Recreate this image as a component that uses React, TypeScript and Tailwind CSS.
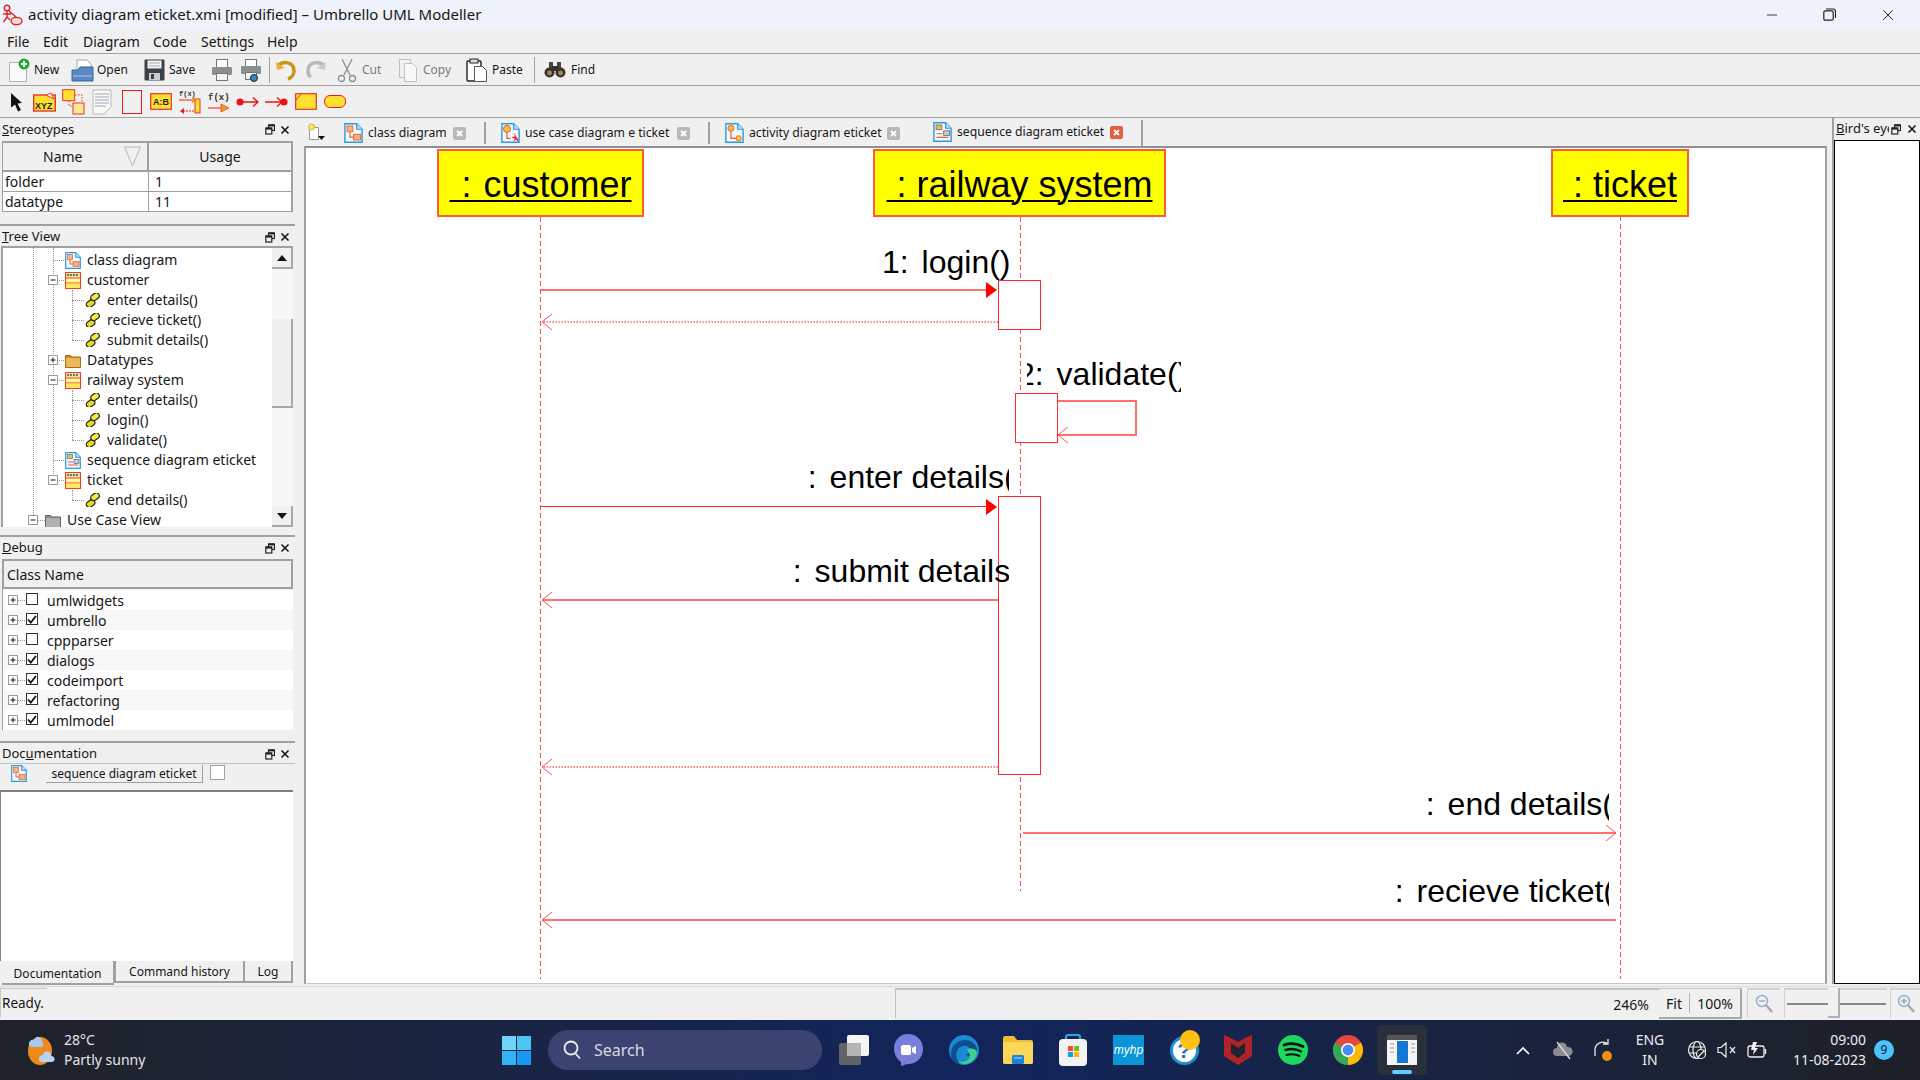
import { Minus, X } from "lucide-react";

// small helper drawings --------------------------------------------------

function FloatIcon() {
  return (
    <svg width="10" height="11" viewBox="0 0 10 11" fill="none" stroke="#222" strokeWidth="1.2">
      <rect x="3.5" y="1" width="6" height="5.5" fill="#f0f0f0" />
      <rect x="0.8" y="4" width="6" height="6" fill="#f0f0f0" />
      <path d="M3.5 1.4h6" strokeWidth="2" />
      <path d="M0.8 4.6h6" strokeWidth="2" />
    </svg>
  );
}

function CloseIcon() {
  return (
    <svg width="10" height="10" viewBox="0 0 10 10" stroke="#111" strokeWidth="1.5">
      <path d="M1.5 1.5l7 7M8.5 1.5l-7 7" />
    </svg>
  );
}

function ClassIcon() {
  return (
    <svg width="16" height="17" viewBox="0 0 16 17" className="shrink-0">
      <rect x="0.5" y="0.5" width="15" height="16" fill="#fff7a0" stroke="#f0401c" />
      <rect x="1" y="1" width="14" height="4" fill="#e8e0b8" />
      <path d="M2 3h12" stroke="#6b7a50" strokeWidth="2" strokeDasharray="2 1" />
      <path d="M1 6h14M1 11h14" stroke="#f0401c" />
      <rect x="1" y="11.5" width="14" height="4.5" fill="#ffe860" />
    </svg>
  );
}

function OpIcon() {
  return (
    <svg width="16" height="14" viewBox="0 0 16 14" className="shrink-0">
      <g transform="rotate(-35 8 7)">
        <rect x="-0.5" y="5.5" width="9" height="6" rx="3" fill="#e8d820" stroke="#222" strokeWidth="1.2" />
        <rect x="7" y="2.5" width="9" height="6" rx="3" fill="#f6ea40" stroke="#222" strokeWidth="1.2" />
      </g>
    </svg>
  );
}

function FolderIcon({ gray }: { gray?: boolean }) {
  return (
    <svg width="16" height="15" viewBox="0 0 16 15" className="shrink-0">
      <path d="M0.5 2.5h5l1.5 1.5h8.5v10.5H0.5z" fill={gray ? "#8e8e8e" : "#c98a20"} stroke={gray ? "#666" : "#a87018"} />
      <rect x="1" y="5" width="14" height="9" fill={gray ? "#b0b0b0" : "#eeb858"} />
    </svg>
  );
}

function DiagramIcon({ kind, size = 16 }: { kind: "class" | "seq" | "usecase" | "activity"; size?: number }) {
  return (
    <svg width={size} height={size + 1} viewBox="0 0 16 17" className="shrink-0">
      <path d="M0.7 0.7h10l4.6 4.6v11H0.7z" fill="#f2f8ff" stroke="#2e9ae0" strokeWidth="1.2" />
      <path d="M10.7 0.7v4.6h4.6" fill="#bfe0f8" stroke="#2e9ae0" />
      {kind === "class" && (
        <>
          <rect x="2.5" y="2.5" width="5" height="5" fill="#f8b080" stroke="#e06030" strokeWidth="0.7" />
          <rect x="8" y="9.5" width="6" height="5" fill="#f8b080" stroke="#e06030" strokeWidth="0.7" />
          <path d="M5 8v4h3" stroke="#e06030" fill="none" />
        </>
      )}
      {kind === "seq" && (
        <>
          <rect x="2.5" y="2.5" width="5" height="4" fill="#d8c060" stroke="#807040" strokeWidth="0.7" />
          <rect x="9" y="7.5" width="5" height="4" fill="#c0c8d0" stroke="#607080" strokeWidth="0.7" />
          <path d="M3 10h5M3 13h10" stroke="#e06030" />
        </>
      )}
      {kind === "usecase" && (
        <>
          <circle cx="5" cy="5" r="3" fill="#f0c040" stroke="#e06030" strokeWidth="0.8" />
          <path d="M5 8v5h3" stroke="#e06030" fill="none" />
          <path d="M11 9l1.5 2.5 -3 .8 3 .8 -1.5 2.4 1.5-2 2 2-1-2.8" fill="#ee2020" stroke="#ee2020" strokeWidth="0.7" />
        </>
      )}
      {kind === "activity" && (
        <>
          <circle cx="5" cy="4.5" r="2.6" fill="#f0c040" stroke="#e06030" strokeWidth="0.8" />
          <path d="M5 7v6h5" stroke="#e06030" fill="none" />
          <circle cx="11.5" cy="13" r="2.2" fill="#f8d030" stroke="#e06030" strokeWidth="0.8" />
        </>
      )}
    </svg>
  );
}

function Expander({ open }: { open?: boolean }) {
  return (
    <svg width="10" height="10" viewBox="0 0 10 10" className="absolute">
      <rect x="0.5" y="0.5" width="9" height="9" fill="#fff" stroke="#999" />
      <path d="M2.5 5h5" stroke="#111" />
      {!open && <path d="M5 2.5v5" stroke="#111" />}
    </svg>
  );
}

function DockTitle({ children, h = "h-[22px]" }: { children: React.ReactNode; h?: string }) {
  return (
    <div className={`flex items-center shrink-0 text-[13px] pl-[2px] ${h}`}>
      <span className="flex-1">{children}</span>
      <span className="w-[10px] mr-[5px] flex"><FloatIcon /></span>
      <span className="w-[10px] mr-[5px] flex"><CloseIcon /></span>
    </div>
  );
}

// tree --------------------------------------------------------------------

type TreeRow = { text: string; level: 0 | 1 | 2; icon: string; exp?: "open" | "closed" };

const treeRows: TreeRow[] = [
  { text: "class diagram", level: 1, icon: "class" },
  { text: "customer", level: 1, icon: "cls", exp: "open" },
  { text: "enter details()", level: 2, icon: "op" },
  { text: "recieve ticket()", level: 2, icon: "op" },
  { text: "submit details()", level: 2, icon: "op" },
  { text: "Datatypes", level: 1, icon: "folder", exp: "closed" },
  { text: "railway system", level: 1, icon: "cls", exp: "open" },
  { text: "enter details()", level: 2, icon: "op" },
  { text: "login()", level: 2, icon: "op" },
  { text: "validate()", level: 2, icon: "op" },
  { text: "sequence diagram eticket", level: 1, icon: "seq" },
  { text: "ticket", level: 1, icon: "cls", exp: "open" },
  { text: "end details()", level: 2, icon: "op" },
  { text: "Use Case View", level: 0, icon: "gray", exp: "open" },
];

function rowIcon(icon: string) {
  if (icon === "class") return <DiagramIcon kind="class" />;
  if (icon === "seq") return <DiagramIcon kind="seq" />;
  if (icon === "cls") return <ClassIcon />;
  if (icon === "op") return <OpIcon />;
  if (icon === "gray") return <FolderIcon gray />;
  return <FolderIcon />;
}

function TreeItem({ row }: { row: TreeRow }) {
  const pad = row.level === 0 ? "pl-[42px]" : row.level === 1 ? "pl-[62px]" : "pl-[82px]";
  const tick =
    row.level === 0 ? "left-[31px] w-[11px]" : row.level === 1 ? "left-[50px] w-[11px]" : "left-[69px] w-[12px]";
  const box = row.level === 0 ? "left-[25px]" : "left-[45px]";
  return (
    <div className={`relative flex items-center gap-[6px] h-[20px] whitespace-nowrap text-[14px] ${pad}`}>
      <span className={`absolute top-[10px] border-t border-dotted border-[#999] ${tick}`} />
      {row.exp && (
        <span className={`absolute top-[5px] w-[10px] h-[10px] ${box}`}>
          <Expander open={row.exp === "open"} />
        </span>
      )}
      {rowIcon(row.icon)}
      <span className="leading-[14px]">{row.text}</span>
    </div>
  );
}

function TreeView() {
  return (
    <div className="flex h-[281px] ml-[1px] mr-[2px] border-l-2 border-t-2 border-[#a0a0a0] bg-white overflow-hidden">
      <div className="relative flex-1 overflow-hidden pt-[2px]">
        <span className="absolute left-[30px] top-0 h-[267px] border-l border-dotted border-[#999]" />
        <span className="absolute left-[50px] top-0 h-[232px] border-l border-dotted border-[#999]" />
        <span className="absolute left-[69px] top-[42px] h-[50px] border-l border-dotted border-[#999]" />
        <span className="absolute left-[69px] top-[142px] h-[50px] border-l border-dotted border-[#999]" />
        <span className="absolute left-[69px] top-[242px] h-[10px] border-l border-dotted border-[#999]" />
        {treeRows.map((r, i) => (
          <TreeItem key={i} row={r} />
        ))}
      </div>
      <div className="w-[21px] flex flex-col bg-[#f6f6f6]">
        <div className="h-[21px] flex items-center justify-center bg-[#f0f0f0] border-b-2 border-r-2 border-[#a8a8a8]">
          <svg width="10" height="6" viewBox="0 0 10 6"><path d="M5 0l5 6H0z" fill="#111" /></svg>
        </div>
        <div className="h-[50px]" />
        <div className="h-[89px] bg-[#f0f0f0] border-b-2 border-r-2 border-[#a8a8a8]" />
        <div className="flex-1" />
        <div className="h-[21px] flex items-center justify-center bg-[#f0f0f0] border-b-2 border-r-2 border-[#a8a8a8]">
          <svg width="10" height="6" viewBox="0 0 10 6"><path d="M5 6l5-6H0z" fill="#111" /></svg>
        </div>
      </div>
    </div>
  );
}

const debugRows = [
  { name: "umlwidgets", on: false },
  { name: "umbrello", on: true },
  { name: "cppparser", on: false },
  { name: "dialogs", on: true },
  { name: "codeimport", on: true },
  { name: "refactoring", on: true },
  { name: "umlmodel", on: true },
];

function DebugRow({ name, on, odd }: { name: string; on: boolean; odd: boolean }) {
  return (
    <div className={`relative flex items-center h-[20px] text-[14px] pl-[44px] ${odd ? "bg-[#f7f7f7]" : "bg-white"}`}>
      <span className="absolute left-[5px] top-[5px] w-[10px] h-[10px]"><Expander /></span>
      <span className="absolute left-[15px] top-[10px] w-[7px] border-t border-dotted border-[#999]" />
      <span className="absolute left-[23px] top-[3px] w-[12px] h-[12px] border border-[#333] bg-white flex items-center justify-center">
        {on && (
          <svg width="10" height="9" viewBox="0 0 10 9" fill="none" stroke="#111" strokeWidth="1.8">
            <path d="M1 4.5l2.8 3L9 1" />
          </svg>
        )}
      </span>
      <span>{name}</span>
    </div>
  );
}

// left docks ----------------------------------------------------------------

function LeftColumn() {
  return (
    <div className="w-[295px] shrink-0 flex flex-col">
      <div className="h-[106px] shrink-0">
        <DockTitle h="h-[23px]">
          <u>S</u>tereotypes
        </DockTitle>
        <div className="ml-[2px] mr-[2px] w-[291px] border-t-2 border-l border-r-2 border-[#a0a0a0]">
          <div className="flex h-[29px] border-b-2 border-[#a0a0a0] text-[14px]">
            <div className="relative w-[146px] border-r-2 border-[#a0a0a0] flex items-center pl-[40px]">
              Name
              <svg className="absolute left-[121px] top-[3px]" width="17" height="21" viewBox="0 0 17 21" fill="none" stroke="#b8b8b8">
                <path d="M0.5 1h16L8.5 20z" />
              </svg>
            </div>
            <div className="flex-1 flex items-center justify-center">Usage</div>
          </div>
          {[
            ["folder", "1"],
            ["datatype", "11"],
          ].map(([a, b]) => (
            <div key={a} className="flex h-[20px] border-b border-[#a0a0a0] bg-white text-[14px]">
              <div className="w-[146px] border-r border-[#a0a0a0] pl-[2px] leading-[19px]">{a}</div>
              <div className="flex-1 pl-[6px] leading-[19px]">{b}</div>
            </div>
          ))}
        </div>
      </div>

      <div className="h-[311px] shrink-0 border-t-2 border-[#a0a0a0]">
        <DockTitle h="h-[20px] pt-[2px]">
          <u>T</u>ree View
        </DockTitle>
        <TreeView />
      </div>

      <div className="h-[206px] shrink-0 border-t-2 border-[#a0a0a0]">
        <DockTitle>
          <u>D</u>ebug
        </DockTitle>
        <div className="ml-[2px] mr-[2px] w-[291px] h-[30px] bg-[#f0f0f0] border-2 border-[#a0a0a0] flex items-center pl-[3px] text-[14px]">
          Class Name
        </div>
        <div className="ml-[2px] w-[291px] border-l border-[#a0a0a0] pt-[1px]">
          {debugRows.map((d, i) => (
            <DebugRow key={d.name} name={d.name} on={d.on} odd={i % 2 === 1} />
          ))}
        </div>
      </div>

      <div className="flex-1 flex flex-col border-t-2 border-[#a0a0a0]">
        <DockTitle h="h-[20px] pt-[2px]">
          Doc<u>u</u>mentation
        </DockTitle>
        <div className="h-[27px] shrink-0 flex items-start border-t border-[#c0c0c0] pt-[1px]">
          <span className="ml-[11px]"><DiagramIcon kind="class" /></span>
          <span className="ml-[19px] w-[157px] h-[18px] bg-[#f0f0f0] border-r border-b border-[#a0a0a0] text-[12px] leading-[17px] text-center">
            sequence diagram eticket
          </span>
          <span className="ml-[7px] w-[15px] h-[15px] bg-white border border-[#a0a0a0]" />
        </div>
        <div className="flex-1 mr-[2px] bg-white border-t-2 border-l border-[#808080]" />
        <div className="h-[25px] shrink-0 flex items-start text-[12px] pl-[2px]">
          <div className="w-[112px] h-[24px] bg-[#f0f0f0] border-b-2 border-r border-[#a0a0a0] text-center leading-[26px]">Documentation</div>
          <div className="w-[131px] h-[22px] bg-[#f0f0f0] border-2 border-t-0 border-[#a0a0a0] text-center leading-[22px]">Command history</div>
          <div className="w-[48px] h-[22px] bg-[#f0f0f0] border-2 border-t-0 border-l-0 border-[#a0a0a0] text-center leading-[22px]">Log</div>
        </div>
      </div>
    </div>
  );
}

// tab bar --------------------------------------------------------------------

function TabClose({ hot }: { hot?: boolean }) {
  return (
    <span className={`w-[13px] h-[13px] rounded-[2px] flex items-center justify-center shrink-0 ${hot ? "bg-[#e2603e]" : "bg-[#b8b8b8]"}`}>
      <svg width="7" height="7" viewBox="0 0 7 7" stroke="#fff" strokeWidth="1.8"><path d="M1 1l5 5M6 1L1 6" /></svg>
    </span>
  );
}

function TabBar() {
  return (
    <div className="h-[28px] shrink-0 flex items-center text-[12.2px] pt-[2px]">
      <svg className="ml-[3px] mr-[4px]" width="19" height="20" viewBox="0 0 19 20">
        <path d="M2.5 4.5h9v12h-9z" fill="#fff" stroke="#999" />
        <circle cx="4.5" cy="4" r="3" fill="#f4e870" stroke="#d0b830" />
        <path d="M11 13h7l-3.5 4z" fill="#111" />
      </svg>
      <span className="ml-[14px] flex"><DiagramIcon kind="class" size={19} /></span>
      <span className="ml-[5px] w-[79px] whitespace-nowrap">class diagram</span>
      <span className="ml-[6px]"><TabClose /></span>
      <span className="ml-[18px] w-[2px] h-[22px] bg-[#a0a0a0]" />
      <span className="ml-[15px] flex"><DiagramIcon kind="usecase" size={19} /></span>
      <span className="ml-[5px] w-[146px] whitespace-nowrap">use case diagram e ticket</span>
      <span className="ml-[6px]"><TabClose /></span>
      <span className="ml-[18px] w-[2px] h-[22px] bg-[#a0a0a0]" />
      <span className="ml-[15px] flex"><DiagramIcon kind="activity" size={19} /></span>
      <span className="ml-[5px] w-[132px] whitespace-nowrap">activity diagram eticket</span>
      <span className="ml-[6px]"><TabClose /></span>
      <span className="ml-[33px] flex -mt-[2px]"><DiagramIcon kind="seq" size={19} /></span>
      <span className="ml-[5px] w-[147px] whitespace-nowrap -mt-[2px]">sequence diagram eticket</span>
      <span className="ml-[6px] -mt-[2px]"><TabClose hot /></span>
      <span className="ml-[18px] w-[2px] h-[26px] bg-[#a0a0a0]" />
    </div>
  );
}

// sequence diagram ---------------------------------------------------------

function Actor({ name, pos }: { name: string; pos: string }) {
  return (
    <div className={`absolute top-[1px] h-[68px] bg-[#ffff00] border-2 border-[#ff5a3c] flex items-center justify-center pt-[3px] font-['Liberation_Sans',sans-serif] text-[36px] leading-[36px] text-black ${pos}`}>
      <span className="whitespace-pre underline decoration-2 underline-offset-[3px]">{" : " + name}</span>
    </div>
  );
}

function Label({ num, text, pos, inner }: { num: string; text: string; pos: string; inner?: string }) {
  return (
    <div className={`absolute h-[37px] overflow-hidden font-['Liberation_Sans',sans-serif] text-[32px] leading-[36px] text-black ${pos}`}>
      <div className={`whitespace-pre ${inner ?? ""}`}>
        <span className="mr-[4px]">{num}</span> {text}
      </div>
    </div>
  );
}

function DiagramLines() {
  return (
    <svg className="absolute inset-0" width="1518" height="834" viewBox="306 148 1518 834" fill="none">
      {/* life lines */}
      <g stroke="#ff4d4d" strokeWidth="1" strokeDasharray="5 3">
        <path d="M540.5 217V979" />
        <path d="M1020.5 217V891" />
        <path d="M1620.5 216V979" />
      </g>

      {/* activations */}
      <g fill="#fff" stroke="#ff2a2a" strokeWidth="1">
        <rect x="998.5" y="280.5" width="42" height="49" />
        <rect x="1015.5" y="393.5" width="42" height="49" />
        <rect x="998.5" y="496.5" width="42" height="278" />
      </g>

      {/* 1: login */}
      <path d="M541 290H987" stroke="#ff7070" strokeWidth="2" />
      <path d="M986 282l11 8-11 8z" fill="#ff0000" />
      <path d="M998 322H542" stroke="#ff6060" strokeWidth="1.5" strokeDasharray="1.5 1.5" />
      <path d="M552 314l-10 8 10 8" stroke="#ff5050" strokeWidth="1" />

      {/* 2: validate */}
      <path d="M1058 401H1136V435H1058" stroke="#ff7070" strokeWidth="2" />
      <path d="M1068 427l-10 8 10 8" stroke="#ff5050" strokeWidth="1" />

      {/* 3: enter details */}
      <path d="M541 506.5H987" stroke="#ff2020" strokeWidth="1.2" />
      <path d="M986 499l11 8-11 8z" fill="#ff0000" />

      {/* 4: submit details */}
      <path d="M998 600H542" stroke="#ff7070" strokeWidth="2" />
      <path d="M552 592l-10 8 10 8" stroke="#ff5050" strokeWidth="1" />
      <path d="M998 767H542" stroke="#ff6060" strokeWidth="1.5" strokeDasharray="1.5 1.5" />
      <path d="M552 759l-10 8 10 8" stroke="#ff5050" strokeWidth="1" />

      {/* 5: end details */}
      <path d="M1023 833H1616" stroke="#ff4040" strokeWidth="1.5" />
      <path d="M1606 825l10 8-10 8" stroke="#ff5050" strokeWidth="1" />

      {/* 6: recieve ticket */}
      <path d="M1616 920H542" stroke="#ff4040" strokeWidth="1.5" />
      <path d="M552 912l-10 8 10 8" stroke="#ff5050" strokeWidth="1" />
    </svg>
  );
}

function Diagram() {
  return (
    <div className="relative flex-1 bg-white border-t-2 border-l-2 border-r-2 border-b border-t-[#909090] border-l-[#a0a0a0] border-r-[#a0a0a0] border-b-[#c8c8c8] overflow-hidden">
      <DiagramLines />
      <Actor name="customer" pos="left-[131px] w-[207px] [word-spacing:2px]" />
      <Actor name="railway system" pos="left-[567px] w-[293px]" />
      <Actor name="ticket" pos="left-[1245px] w-[138px]" />
      <Label num="1:" text="login()" pos="left-[576px] top-[96px] w-[132px]" />
      <Label num="2:" text="validate()" pos="left-[721px] top-[208px] w-[154px]" inner="-ml-[10px]" />
      <Label num="3:" text="enter details()" pos="left-[502px] top-[311px] w-[201px]" inner="-ml-[18px]" />
      <Label num="4:" text="submit details()" pos="left-[487px] top-[405px] w-[216px]" inner="-ml-[18px]" />
      <Label num="5:" text="end details()" pos="left-[1120px] top-[638px] w-[183px]" inner="-ml-[18px]" />
      <Label num="6:" text="recieve ticket()" pos="left-[1089px] top-[725px] w-[214px]" inner="-ml-[18px]" />
    </div>
  );
}

// tool bars ------------------------------------------------------------------

function TitleBar() {
  return (
    <div className="h-[29px] shrink-0 bg-[#eef2fa] flex items-center text-[15px]">
      <svg className="ml-[2px]" width="21" height="22" viewBox="0 0 21 22" fill="none" stroke="#e02020" strokeWidth="1.4">
        <circle cx="5" cy="4" r="2.8" />
        <path d="M5 7v6M1 10h8M5 13l-3.5 5M5 13l3 3" />
        <path d="M7 7l7 6" />
        <ellipse cx="14.5" cy="17" rx="5.5" ry="3.6" fill="#fde0d8" />
      </svg>
      <span className="ml-[5px] flex-1 whitespace-nowrap">activity diagram eticket.xmi [modified] – Umbrello UML Modeller</span>
      <Minus className="w-[16px] h-[16px] mr-[43px]" strokeWidth={1.2} />
      <svg className="mr-[43px]" width="13" height="13" viewBox="0 0 13 13" fill="none" stroke="#222" strokeWidth="1.2">
        <rect x="0.8" y="2.8" width="9.4" height="9.4" rx="1.5" />
        <path d="M3 1h7a2.5 2.5 0 0 1 2.5 2.5V10" />
      </svg>
      <X className="w-[18px] h-[18px] mr-[23px]" strokeWidth={1.2} />
    </div>
  );
}

function MenuBar() {
  return (
    <div className="h-[25px] shrink-0 border-b border-[#a0a0a0] flex items-center pl-[7px] text-[14px]">
      <span className="w-[36px]">File</span>
      <span className="w-[40px]">Edit</span>
      <span className="w-[70px]">Diagram</span>
      <span className="w-[48px]">Code</span>
      <span className="w-[66px]">Settings</span>
      <span>Help</span>
    </div>
  );
}

function ToolbarOne() {
  return (
    <div className="h-[32px] shrink-0 border-b border-[#a0a0a0] flex items-center text-[12px] pt-[1px]">
      {/* New */}
      <svg className="ml-[8px]" width="23" height="25" viewBox="0 0 23 25">
        <path d="M1.5 4.5h12l5 5v14h-17z" fill="#fafafa" stroke="#b0b0b0" />
        <circle cx="16" cy="6" r="5.5" fill="#28a838" />
        <path d="M16 3v6M13 6h6" stroke="#fff" strokeWidth="2" />
      </svg>
      <span className="ml-[3px] w-[28px]">New</span>
      {/* Open */}
      <svg className="ml-[9px]" width="23" height="25" viewBox="0 0 23 25">
        <path d="M6 2h10l4 4v9H6z" fill="#fff" stroke="#9aa" />
        <path d="M1 12h6l2-3h13v14H1z" fill="#5a88c4" stroke="#3a6494" />
        <rect x="2" y="17" width="19" height="2" fill="#86a8d4" />
      </svg>
      <span className="ml-[3px] w-[30px]">Open</span>
      {/* Save */}
      <svg className="ml-[17px]" width="21" height="24" viewBox="0 0 21 24">
        <rect x="0.5" y="1.5" width="20" height="21" rx="1" fill="#3c4048" />
        <rect x="3.5" y="2.5" width="14" height="8" fill="#f4f4f4" />
        <path d="M5 5h11M5 8h11" stroke="#aaa" />
        <rect x="5" y="15" width="11" height="7" fill="#c8ccd0" />
        <rect x="7" y="16" width="3" height="5" fill="#3c4048" />
      </svg>
      <span className="ml-[4px] w-[28px]">Save</span>
      {/* Print */}
      <svg className="ml-[14px]" width="22" height="24" viewBox="0 0 22 24">
        <rect x="5.5" y="1.5" width="11" height="8" fill="#fff" stroke="#777" />
        <rect x="1" y="9" width="20" height="8" rx="1" fill="#8a8f94" />
        <rect x="5.5" y="15.5" width="11" height="7" fill="#f4f4f4" stroke="#777" />
      </svg>
      <svg className="ml-[7px]" width="23" height="25" viewBox="0 0 23 25">
        <rect x="5.5" y="1.5" width="11" height="7" fill="#fff" stroke="#777" />
        <rect x="1" y="8" width="20" height="8" rx="1" fill="#8a8f94" />
        <rect x="5.5" y="14.5" width="11" height="7" fill="#f4f4f4" stroke="#777" />
        <circle cx="14" cy="20" r="3.5" fill="#3088c8" stroke="#222" />
      </svg>
      <span className="ml-[6px] w-px h-[26px] bg-[#a0a0a0]" />
      {/* Undo / redo */}
      <svg className="ml-[5px]" width="22" height="22" viewBox="0 0 22 22" fill="none">
        <path d="M3 7c5-6 16-4 16 5 0 4-3 7-6 8" stroke="#c89418" strokeWidth="3.5" />
        <path d="M1 3l1 8 8-2z" fill="#e8b030" />
      </svg>
      <svg className="ml-[8px]" width="22" height="22" viewBox="0 0 22 22" fill="none">
        <path d="M19 7c-5-6-16-4-16 5 0 4 1 5 3 6" stroke="#b4b8b8" strokeWidth="3.5" />
        <path d="M21 3l-1 8-8-2z" fill="#c8cccc" />
      </svg>
      {/* Cut */}
      <svg className="ml-[10px]" width="20" height="25" viewBox="0 0 20 25" fill="none" stroke="#8e8e8e" strokeWidth="1.3">
        <path d="M5 1l8 16M15 1L7 17" />
        <circle cx="4.5" cy="20.5" r="3" />
        <circle cx="15.5" cy="20.5" r="3" />
      </svg>
      <span className="ml-[5px] w-[36px] text-[#7c7c7c]">Cut</span>
      {/* Copy */}
      <svg width="20" height="25" viewBox="0 0 20 25" fill="none" stroke="#c0c0c0">
        <path d="M1.5 1.5h11v18h-11z" />
        <path d="M6.5 5.5h8l4 4v14h-12z" fill="#f8f8f8" />
      </svg>
      <span className="ml-[5px] w-[43px] text-[#7c7c7c]">Copy</span>
      {/* Paste */}
      <svg width="22" height="25" viewBox="0 0 22 25">
        <rect x="1" y="3" width="14" height="20" rx="1" fill="#fff" stroke="#222" strokeWidth="1.4" />
        <rect x="4" y="1" width="8" height="4" fill="#ddd" stroke="#222" />
        <path d="M8.5 8.5h8l4 4v11h-12z" fill="#fff" stroke="#555" />
      </svg>
      <span className="ml-[4px] w-[31px]">Paste</span>
      <span className="ml-[11px] w-px h-[26px] bg-[#a0a0a0]" />
      {/* Find */}
      <svg className="ml-[9px]" width="22" height="18" viewBox="0 0 22 18">
        <rect x="5" y="1" width="4" height="6" fill="#444" />
        <rect x="13" y="1" width="4" height="6" fill="#444" />
        <rect x="8" y="5" width="6" height="5" fill="#333" />
        <circle cx="5.5" cy="11.5" r="5" fill="#3a3428" />
        <circle cx="16.5" cy="11.5" r="5" fill="#3a3428" />
        <circle cx="5.5" cy="12" r="2.4" fill="#a08a60" />
        <circle cx="16.5" cy="12" r="2.4" fill="#a08a60" />
      </svg>
      <span className="ml-[5px]">Find</span>
    </div>
  );
}

function ToolbarTwo() {
  return (
    <div className="h-[32px] shrink-0 border-b border-[#a0a0a0] flex items-center">
      <svg className="ml-[10px]" width="13" height="20" viewBox="0 0 13 20">
        <path d="M1 1l11 10-4.5.5L11 18l-3 1.5-3-7-4 3z" fill="#111" />
      </svg>
      <svg className="ml-[10px]" width="23" height="20" viewBox="0 0 23 20">
        <rect x="0.7" y="3" width="21.6" height="16" fill="#ffe030" stroke="#e8342a" strokeWidth="1.4" />
        <path d="M13 3l5-2 3 6z" fill="#fff" stroke="#e8342a" />
        <text x="2" y="17" fontSize="9" fontWeight="700" fontFamily="Liberation Sans" fill="#222">XYZ</text>
      </svg>
      <svg className="ml-[6px]" width="23" height="26" viewBox="0 0 23 26">
        <rect x="0.7" y="0.7" width="12" height="11" fill="#ffe030" stroke="#e8342a" />
        <path d="M7 12v5h5" stroke="#e8342a" strokeDasharray="1.5 1.5" fill="none" />
        <rect x="11" y="14" width="11" height="11" fill="#ffe890" stroke="#e8342a" />
        <path d="M13 6h7v8" stroke="#e8342a" strokeDasharray="1.5 1.5" fill="none" />
      </svg>
      <svg className="ml-[7px]" width="20" height="26" viewBox="0 0 20 26">
        <path d="M1 1h18v17l-7 7H1z" fill="#f8f8f8" stroke="#b8b8b8" />
        <path d="M3 5h14M3 8h14M3 11h14M3 14h14M3 17h11" stroke="#9aa8b8" />
      </svg>
      <span className="ml-[10px] w-[20px] h-[24px] border border-[#f01818] bg-[#f0f0f0]" />
      <svg className="ml-[8px]" width="22" height="17" viewBox="0 0 22 17">
        <rect x="0.7" y="0.7" width="20.6" height="15.6" fill="#ffe030" stroke="#e8342a" strokeWidth="1.2" />
        <text x="3" y="12" fontSize="9" fontWeight="700" fontFamily="Liberation Sans" fill="#222">A:B</text>
      </svg>
      <svg className="ml-[7px]" width="22" height="26" viewBox="0 0 22 26" fill="none">
        <text x="0" y="7" fontSize="7" fontFamily="Liberation Mono" fontWeight="700" fill="#333">f(x)</text>
        <path d="M0 11h15" stroke="#f01818" />
        <path d="M13 8l6 3-6 3z" fill="#f0a020" />
        <rect x="16" y="10" width="5" height="14" fill="#ffe030" stroke="#e8342a" />
        <path d="M15 22H2" stroke="#f01818" strokeDasharray="2 1" />
        <path d="M5 19l-4 3 4 3z" fill="#f01818" />
      </svg>
      <svg className="ml-[7px]" width="23" height="24" viewBox="0 0 23 24" fill="none">
        <text x="0" y="10" fontSize="9" fontFamily="Liberation Mono" fontWeight="700" fill="#333">f(x)</text>
        <path d="M0 18h15" stroke="#f01818" />
        <path d="M13 14l8 4-8 4z" fill="#f0a020" stroke="#f01818" strokeWidth="0.6" />
      </svg>
      <svg className="ml-[5px]" width="23" height="12" viewBox="0 0 23 12" fill="none">
        <circle cx="4" cy="6" r="3.5" fill="#f01010" />
        <path d="M4 6h18M17 1.5l5 4.5-5 4.5" stroke="#f01010" strokeWidth="1.4" />
      </svg>
      <svg className="ml-[6px]" width="23" height="12" viewBox="0 0 23 12" fill="none">
        <circle cx="19" cy="6" r="3.5" fill="#f01010" />
        <path d="M0 6h18M12 1.5l5 4.5-5 4.5" stroke="#f01010" strokeWidth="1.4" />
      </svg>
      <svg className="ml-[7px]" width="22" height="17" viewBox="0 0 22 17">
        <rect x="0.7" y="0.7" width="20.6" height="15.6" fill="#ffe030" stroke="#e8342a" strokeWidth="1.2" />
        <path d="M1 7l5-6" stroke="#e8342a" />
      </svg>
      <span className="ml-[7px] w-[22px] h-[13px] rounded-[6px] border border-[#f01818] bg-[#ffe030]" />
    </div>
  );
}

// status bar ------------------------------------------------------------------

function Magnifier({ plus }: { plus?: boolean }) {
  return (
    <svg width="18" height="20" viewBox="0 0 18 20" fill="none">
      <circle cx="7" cy="7" r="5.5" fill="#e8f0fa" stroke="#9ab0c8" strokeWidth="1.5" />
      <path d="M4 7h6" stroke="#7a90a8" />
      {plus && <path d="M7 4v6" stroke="#7a90a8" />}
      <path d="M11 11l6 7" stroke="#a8a8a8" strokeWidth="2.4" />
    </svg>
  );
}

function StatusBar() {
  return (
    <div className="h-[34px] shrink-0 flex text-[14px] pt-[1px] pb-[2px] border-t border-[#d8d8d8]">
      <div className="w-[47px] border-l border-t border-[#c8c8c8] flex items-center pl-[1px] text-[13.5px]">Ready.</div>
      <div className="w-[848px]" />
      <div className="flex-1 flex items-center border-t-2 border-l border-[#c0c0c0] justify-end">
        <span className="text-[14px]">246%</span>
        <div className="ml-[10px] w-[83px] h-[30px] flex items-center bg-[#f0f0f0] border-b-2 border-r-2 border-[#a8a8a8] text-[14px]">
          <span className="w-[30px] text-center">Fit</span>
          <span className="w-px h-[20px] bg-[#b0b0b0]" />
          <span className="flex-1 text-center">100%</span>
        </div>
      </div>
      <div className="ml-[5px] w-[33px] flex items-center justify-center border-t-2 border-l border-[#d0d0d0]"><Magnifier /></div>
      <div className="relative ml-[4px] w-[103px] flex items-center border-t-2 border-l border-[#d0d0d0]">
        <span className="ml-[2px] w-[99px] h-[2px] bg-[#888]" />
        <span className="absolute left-[43px] -top-[2px] w-[12px] h-[30px] bg-[#f0f0f0] border-r-2 border-b-2 border-[#b0b0b0]" />
      </div>
      <div className="ml-[3px] w-[30px] shrink-0 flex items-center justify-center border-t-2 border-l border-[#d0d0d0]"><Magnifier plus /></div>
    </div>
  );
}

// windows task bar ---------------------------------------------------------

function Chrome() {
  return (
    <svg width="30" height="30" viewBox="0 0 30 30">
      <circle cx="15" cy="15" r="15" fill="#e8453c" />
      <path d="M15 15L28 22.5A15 15 0 0 1 15 30z" fill="#fbbc05" />
      <path d="M15 15L15 30A15 15 0 0 1 2 7.5z" fill="#34a853" />
      <path d="M15 15L28 7.5A15 15 0 0 1 30 15 15 15 0 0 1 28 22.5z" fill="#fbbc05" />
      <circle cx="15" cy="15" r="7" fill="#fff" />
      <circle cx="15" cy="15" r="5.4" fill="#4a8af4" />
    </svg>
  );
}

function Taskbar() {
  return (
    <div className="h-[60px] shrink-0 flex items-center text-white bg-gradient-to-r from-[#1f2229] via-[#12245c] to-[#1d2027]">
      <svg className="ml-[25px]" width="32" height="30" viewBox="0 0 32 30">
        <ellipse cx="15" cy="16" rx="12" ry="14" fill="#ee8a1a" />
        <path d="M4 10a4 4 0 0 1 5-5 4 4 0 0 1 8 2 3 3 0 0 1 0 5H6a3 3 0 0 1-2-2z" fill="#a8c8ee" />
        <path d="M14 25a4 4 0 0 1 4-5 4 4 0 0 1 8 1 3 3 0 0 1 1 6H16a3 3 0 0 1-2-2z" fill="#b8d4f4" />
      </svg>
      <div className="ml-[7px] w-[100px] text-[14px] leading-[20px] text-[#e4e6ea] whitespace-nowrap">
        <div>28°C</div>
        <div>Partly sunny</div>
      </div>
      <svg className="ml-[338px]" width="29" height="29" viewBox="0 0 29 29">
        <rect x="0" y="0" width="14" height="14" fill="#6fd4f8" />
        <rect x="15" y="0" width="14" height="14" fill="#4cc4f4" />
        <rect x="0" y="15" width="14" height="14" fill="#30b4f4" />
        <rect x="15" y="15" width="14" height="14" fill="#1898f0" />
      </svg>
      <div className="ml-[17px] w-[274px] h-[40px] rounded-[20px] bg-[#3b4470] flex items-center pl-[14px] text-[16px] text-[#d8dae4]">
        <svg width="20" height="22" viewBox="0 0 20 22" fill="none" stroke="#eef0f6" strokeWidth="1.8">
          <circle cx="9" cy="9" r="6.5" />
          <path d="M13.5 14.5l4.5 5" />
        </svg>
        <span className="ml-[12px]">Search</span>
      </div>
      <svg className="ml-[17px]" width="30" height="30" viewBox="0 0 30 30">
        <rect x="8" y="0" width="22" height="21" rx="2" fill="#f4f4f4" />
        <rect x="0" y="8" width="22" height="22" rx="2" fill="#6a6a6a" fillOpacity="0.9" />
        <rect x="8" y="8" width="14" height="13" fill="#b4b4b4" />
      </svg>
      <svg className="ml-[25px]" width="29" height="32" viewBox="0 0 29 32">
        <path d="M14 0c8 0 15 6 15 15s-7 15-15 15c-3 0-5 2-7 2v-4C3 25 0 20 0 15 0 6 6 0 14 0z" fill="#7b7fdc" />
        <rect x="7" y="11" width="10" height="10" rx="2" fill="#fff" />
        <path d="M18 14l4-2v8l-4-2z" fill="#fff" />
      </svg>
      <svg className="ml-[26px]" width="30" height="30" viewBox="0 0 30 30">
        <circle cx="15" cy="15" r="15" fill="#1a8ad4" />
        <path d="M2 19C2 9 10 5 16 5c7 0 12 5 12 10 0 4-3 6-7 6-2 0-4-1-4-2 3 0 4-2 4-4s-3-5-7-4c-6 1-8 8-6 13 1 3 3 4 5 5C7 29 2 25 2 19z" fill="#0c4e90" />
        <path d="M18 14c3-1 10-1 10 4-1 6-6 11-13 11-3 0-5-1-6-3 5 2 12 0 12-6z" fill="#3ed08c" />
      </svg>
      <svg className="ml-[24px]" width="30" height="28" viewBox="0 0 30 28">
        <path d="M0 2a2 2 0 0 1 2-2h9l3 4h14a2 2 0 0 1 2 2v20a2 2 0 0 1-2 2H2a2 2 0 0 1-2-2z" fill="#f0bc30" />
        <rect x="0" y="6" width="30" height="22" rx="2" fill="#fcd658" />
        <rect x="9" y="19" width="12" height="9" rx="1.5" fill="#1c84d8" />
        <rect x="11" y="21" width="8" height="2" fill="#60b8f0" />
      </svg>
      <svg className="ml-[25px]" width="30" height="32" viewBox="0 0 30 32">
        <path d="M8 6V3a2 2 0 0 1 2-2h10a2 2 0 0 1 2 2v3" stroke="#2aa6ea" strokeWidth="2.2" fill="none" />
        <rect x="1" y="5" width="28" height="27" rx="4" fill="#f2f2f2" />
        <rect x="10" y="12" width="5" height="5" fill="#f05030" />
        <rect x="16" y="12" width="5" height="5" fill="#80b820" />
        <rect x="10" y="18" width="5" height="5" fill="#10a0f0" />
        <rect x="16" y="18" width="5" height="5" fill="#ffb800" />
      </svg>
      <div className="ml-[25px] w-[31px] h-[30px] bg-[#0a96d6] flex items-center justify-center text-[12px] italic text-white font-['Liberation_Sans',sans-serif]">myhp</div>
      <div className="relative ml-[24px] w-[32px] h-[30px] flex items-center justify-center">
        <span className="w-[29px] h-[29px] rounded-full bg-white border-[3px] border-[#1c90d0] flex items-center justify-center text-[#1c78b8] text-[22px] font-bold font-['Liberation_Sans',sans-serif]">?</span>
        <span className="absolute -top-[5px] right-0 w-[20px] h-[20px] rounded-full bg-[#ffc010]" />
      </div>
      <svg className="ml-[24px]" width="28" height="30" viewBox="0 0 28 30">
        <path d="M0 0l7 3 7 4 7-4 7-3v21l-14 9-14-9z" fill="#b02428" />
        <path d="M7 8l7 5 7-5v10l-7 5-7-5z" fill="#1f2330" />
      </svg>
      <svg className="ml-[26px]" width="30" height="30" viewBox="0 0 30 30" fill="none">
        <circle cx="15" cy="15" r="15" fill="#1ed760" />
        <path d="M6 10c6-2 13-1.5 19 1.5" stroke="#111" strokeWidth="2.8" strokeLinecap="round" />
        <path d="M7.5 15c5-1.5 11-1 15.5 1.5" stroke="#111" strokeWidth="2.4" strokeLinecap="round" />
        <path d="M8.5 20c4-1 9-1 13 1" stroke="#111" strokeWidth="2" strokeLinecap="round" />
      </svg>
      <span className="ml-[25px] flex"><Chrome /></span>
      <div className="relative ml-[14px] w-[50px] h-[50px] rounded-[5px] bg-[#2a2f3c] flex items-center justify-center">
        <svg width="30" height="30" viewBox="0 0 30 30">
          <rect width="30" height="30" fill="#f4f4f4" />
          <rect y="0" width="30" height="5" fill="#555" />
          <rect x="10" y="6" width="11" height="22" fill="#1478d4" />
          <path d="M3 9h4M3 13h4M3 17h4M24 9h4M24 13h4M24 17h4" stroke="#999" />
        </svg>
        <span className="absolute bottom-[1px] left-[15px] w-[20px] h-[4px] rounded-[2px] bg-[#60cdff]" />
      </div>
      <svg className="ml-[89px]" width="14" height="9" viewBox="0 0 14 9" fill="none" stroke="#fff" strokeWidth="1.6">
        <path d="M1 8l6-6 6 6" />
      </svg>
      <svg className="ml-[23px]" width="20" height="20" viewBox="0 0 20 20" fill="none">
        <path d="M4 16a4 4 0 0 1 0-8 5 5 0 0 1 10-1 4.5 4.5 0 0 1 2 9z" fill="#8a8c92" />
        <path d="M4 2l13 17" stroke="#ddd" strokeWidth="1.3" />
      </svg>
      <svg className="ml-[20px]" width="20" height="24" viewBox="0 0 20 24" fill="none" stroke="#e8e8e8" strokeWidth="1.3">
        <path d="M2 13a8 8 0 0 1 13-7M15 1v5h-5" />
        <path d="M2 18v-5" />
        <circle cx="14" cy="18" r="5" fill="#f09010" stroke="none" />
      </svg>
      <div className="ml-[19px] w-[36px] text-center text-[14px] leading-[20px] text-[#eceef2]">
        <div>ENG</div>
        <div>IN</div>
      </div>
      <svg className="ml-[19px]" width="20" height="20" viewBox="0 0 20 20" fill="none" stroke="#f0f0f0" strokeWidth="1.2">
        <circle cx="10" cy="10" r="8.5" />
        <ellipse cx="10" cy="10" rx="4" ry="8.5" />
        <path d="M2 7h16M2 13h16" />
        <circle cx="14" cy="14" r="4.5" fill="#1d2128" />
        <path d="M11 17l6-6" />
      </svg>
      <svg className="ml-[10px]" width="20" height="16" viewBox="0 0 20 16" fill="none" stroke="#eee" strokeWidth="1.2">
        <path d="M1 5.5h3l5-4.5v14l-5-4.5H1z" />
        <path d="M13 5l5 6M18 5l-5 6" />
      </svg>
      <svg className="ml-[10px]" width="20" height="18" viewBox="0 0 20 18" fill="none" stroke="#f2f2f2" strokeWidth="1.3">
        <rect x="1" y="5" width="16" height="11" rx="2" />
        <path d="M18.5 8v5" />
        <path d="M6 1l-2 8h3l-1 5 5-7H8l2-6z" fill="#f2f2f2" stroke="none" />
      </svg>
      <div className="ml-[12px] w-[87px] text-right text-[14px] leading-[20px] text-[#eceef2]">
        <div>09:00</div>
        <div>11-08-2023</div>
      </div>
      <span className="ml-[8px] w-[20px] h-[20px] rounded-full bg-[#4cc2ff] text-[#10202c] text-[12px] flex items-center justify-center">9</span>
    </div>
  );
}

export default function App() {
  return (
    <div className="w-[1920px] h-[1080px] flex flex-col overflow-hidden bg-[#f0f0f0] text-[#161616] font-['Noto_Sans',sans-serif]">
      <TitleBar />
      <MenuBar />
      <ToolbarOne />
      <ToolbarTwo />
      <div className="flex-1 min-h-0 flex">
        <LeftColumn />
        <div className="w-[7px] shrink-0" />
        <div className="flex-1 flex flex-col min-w-0 mb-[2px] ml-[2px]">
          <TabBar />
          <Diagram />
        </div>
        <div className="w-[7px] shrink-0 border-r-2 border-[#a0a0a0] mb-[2px]" />
        <div className="w-[86px] shrink-0 flex flex-col mb-[2px]">
          <div className="h-[22px] shrink-0 flex items-center text-[13px] pl-[2px]">
            <span className="w-[53px] overflow-hidden whitespace-nowrap">
              <u>B</u>ird's eye view
            </span>
            <span className="ml-[2px] w-[10px] flex"><FloatIcon /></span>
            <span className="ml-[6px] w-[10px] flex"><CloseIcon /></span>
          </div>
          <div className="flex-1 bg-white border border-black" />
        </div>
      </div>
      <StatusBar />
      <Taskbar />
    </div>
  );
}
